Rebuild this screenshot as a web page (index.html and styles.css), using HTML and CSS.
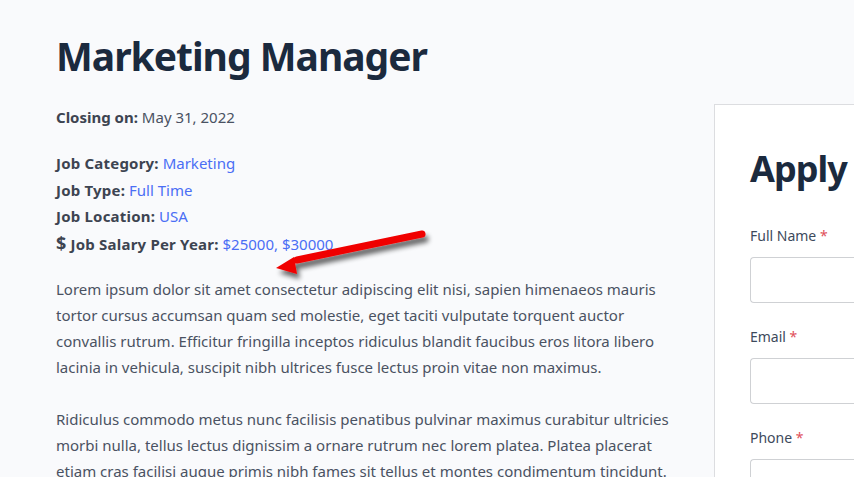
FILE: index.html
```html
<!DOCTYPE html>
<html>
<head>
<meta charset="utf-8">
<link rel="stylesheet" href="styles.css">
</head>
<body>
<div class="page">
  <main class="main">
    <h1 class="title">Marketing Manager</h1>
    <p class="meta"><b>Closing on:</b> May 31, 2022</p>
    <div class="details">
      <div class="row"><b>Job Category:</b> <a class="link">Marketing</a></div>
      <div class="row"><b>Job Type:</b> <a class="link">Full Time</a></div>
      <div class="row"><b>Job Location:</b> <a class="link">USA</a></div>
      <div class="row"><b><span class="dollar">$</span> Job Salary Per Year:</b> <a class="link">$25000, $30000</a></div>
    </div>
    <p class="text">Lorem ipsum dolor sit amet consectetur adipiscing elit nisi, sapien himenaeos mauris tortor cursus accumsan quam sed molestie, eget taciti vulputate torquent auctor convallis rutrum. Efficitur fringilla inceptos ridiculus blandit faucibus eros litora libero lacinia in vehicula, suscipit nibh ultrices fusce lectus proin vitae non maximus.</p>
    <p class="text">Ridiculus commodo metus nunc facilisis penatibus pulvinar maximus curabitur ultricies morbi nulla, tellus lectus dignissim a ornare rutrum nec lorem platea. Platea placerat etiam cras facilisi augue primis nibh fames sit tellus et montes condimentum tincidunt.</p>
  </main>
  <aside class="card">
    <h2 class="apply">Apply</h2>
    <label class="label">Full Name <span class="req">*</span></label>
    <div class="input"></div>
    <label class="label">Email <span class="req">*</span></label>
    <div class="input"></div>
    <label class="label">Phone <span class="req">*</span></label>
    <div class="input"></div>
  </aside>
</div>
<svg class="arrow" width="200" height="80" viewBox="0 0 200 80">
  <defs>
    <filter id="sh" x="-20%" y="-50%" width="140%" height="200%">
      <feGaussianBlur in="SourceAlpha" stdDeviation="2.5"/>
      <feOffset dx="3" dy="5" result="b"/>
      <feComponentTransfer><feFuncA type="linear" slope="0.6"/></feComponentTransfer>
      <feMerge><feMergeNode/><feMergeNode in="SourceGraphic"/></feMerge>
    </filter>
  </defs>
  <g filter="url(#sh)">
    <line x1="155" y1="14" x2="30" y2="40" stroke="#f00000" stroke-width="7" stroke-linecap="round"/>
    <polygon points="9,48 27,37 30,54" fill="#f00000"/>
  </g>
</svg>
</body>
</html>
```
FILE: styles.css
```css
html, body {
  margin: 0;
  padding: 0;
  background: #f9fafc;
  overflow: hidden;
}
body {
  font-family: "Noto Sans", "Open Sans", sans-serif;
  color: #4a5262;
  width: 854px;
  height: 477px;
  position: relative;
}
.page {
  display: flex;
  gap: 44px;
  padding-left: 56px;
}
.main {
  width: 614px;
  flex: none;
}
.title {
  margin: 30px 0 0;
  font-size: 39px;
  letter-spacing: -1px;
  line-height: 52px;
  font-weight: 700;
  color: #1b2a3e;
}
.meta {
  margin: 22px 0 20px;
  font-size: 15px;
  line-height: 26px;
}
b {
  font-weight: 700;
  color: #3d4451;
}
.details {
  font-size: 15px;
  line-height: 26.5px;
}
.details b {
  letter-spacing: 0.2px;
}
.dollar {
  font-size: 18px;
}
.link {
  color: #4a6ef5;
}
.text {
  font-size: 15px;
  line-height: 26px;
  margin: 19px 0 0;
}
.text + .text {
  margin-top: 26px;
}
.card {
  margin-top: 104px;
  background: #ffffff;
  border: 1px solid #dcdde0;
  border-right: none;
  flex: 1;
  padding: 42px 0 0 35px;
  height: 400px;
}
.apply {
  margin: 0 0 35px;
  font-size: 36px;
  letter-spacing: -1px;
  line-height: 44px;
  font-weight: 700;
  color: #1b2a3e;
}
.label {
  display: block;
  font-size: 14px;
  line-height: 20px;
  color: #3d4a5c;
  margin-bottom: 11px;
}
.req {
  color: #e0505a;
}
.input {
  height: 44px;
  border: 1px solid #cfd1d4;
  border-right: none;
  border-radius: 4px 0 0 4px;
  background: #fff;
  margin-bottom: 24px;
}
.arrow {
  position: absolute;
  left: 267px;
  top: 220px;
}
```
